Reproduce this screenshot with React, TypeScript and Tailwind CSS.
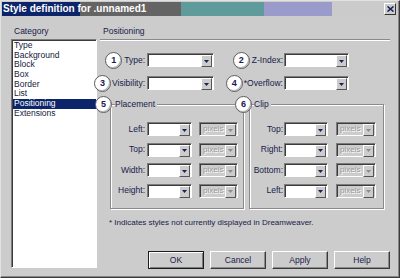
import React from 'react';

const labelColor = 'text-[#17204a]';

function Badge({ n }: { n: number }) {
  return (
    <div className="w-[17px] h-[17px] shrink-0 rounded-full bg-white border border-[#5c5c5c] shadow-[inset_-1px_-1px_0_#b8b8b8] flex items-center justify-center text-[9px] font-bold leading-none text-[#17204a]">
      {n}
    </div>
  );
}

function Select({ w, disabled }: { w: string; disabled?: boolean }) {
  return (
    <div
      className={`${w} h-[14px] shrink-0 flex border border-t-[#7c7c7c] border-l-[#7c7c7c] border-r-white border-b-white shadow-[inset_1px_1px_0_#3c3c3c] ${
        disabled ? 'bg-[#cccccc]' : 'bg-white'
      }`}
    >
      <div className="flex-1 pl-[3px] text-[8px] leading-[12px] text-[#9a9a9a] [text-shadow:1px_1px_0_#fff]">
        {disabled ? 'pixels' : ''}
      </div>
      <div className="w-[11px] h-[12px] mt-px mr-px bg-[#cccccc] border border-t-white border-l-white border-r-[#555] border-b-[#555] flex items-center justify-center">
        <svg width="5" height="3" viewBox="0 0 5 3">
          <path d="M0 0h5L2.5 3z" fill={disabled ? '#8c8c8c' : '#14235a'} />
        </svg>
      </div>
    </div>
  );
}

function Button({ children, primary }: { children: React.ReactNode; primary?: boolean }) {
  return (
    <div
      className={`w-[56px] h-[18px] flex items-center justify-center bg-[#cccccc] text-[8.5px] ${labelColor} ${
        primary
          ? 'border border-[#1c1c1c] shadow-[inset_1px_1px_0_#fff,inset_-1px_-1px_0_#7c7c7c]'
          : 'border border-t-white border-l-white border-r-[#3a3a3a] border-b-[#3a3a3a] shadow-[inset_-1px_-1px_0_#8a8a8a]'
      }`}
    >
      {children}
    </div>
  );
}

const categories = ['Type', 'Background', 'Block', 'Box', 'Border', 'List', 'Positioning', 'Extensions'];

export default function App() {
  return (
    <div className="w-[400px] h-[278px] flex flex-col bg-[#cccccc] border border-t-[#e2e2e2] border-l-[#e2e2e2] border-r-[#3a3a3a] border-b-[#3a3a3a] shadow-[inset_-1px_-1px_0_#888] font-['Liberation_Sans',Arial,sans-serif]">
      {/* title bar */}
      <div className="mt-px mx-px h-[14px] flex items-center bg-[linear-gradient(to_right,#0c2469_78px,#646464_78px,#646464_179px,#5f9b9a_179px,#5f9b9a_262px,#9a9acb_262px,#9a9acb_330px,#cbcbcb_330px)]">
        <span className="pl-[1px] text-[10px] font-bold text-white leading-[14px] whitespace-nowrap">
          Style definition for .unnamed1
        </span>
        <div className="flex-1" />
        <div className="w-[12px] h-[12px] mr-[2px] bg-[#cccccc] border border-t-white border-l-white border-r-[#333] border-b-[#333] flex items-center justify-center">
          <svg width="7" height="6" viewBox="0 0 7 6">
            <path d="M0.5 0.5l6 5M6.5 0.5l-6 5" stroke="#14235a" strokeWidth="1.6" />
          </svg>
        </div>
      </div>

      <div className="flex pt-[9px]">
        {/* category column */}
        <div className="ml-[10px] w-[86px] flex flex-col">
          <div className={`pl-[3px] h-[12px] leading-[12px] text-[8.5px] ${labelColor}`}>Category</div>
          <div className="mt-[2px] h-[229px] bg-white border border-t-[#7c7c7c] border-l-[#7c7c7c] border-r-white border-b-white shadow-[inset_1px_1px_0_#3c3c3c] pt-[1px] pl-[1px]">
            {categories.map((c) => (
              <div
                key={c}
                className={`h-[9.7px] leading-[9.7px] pl-[1px] text-[8.5px] ${
                  c === 'Positioning' ? 'bg-[#0c2469] text-white' : 'text-[#14193a]'
                }`}
              >
                {c}
              </div>
            ))}
          </div>
        </div>

        {/* positioning column */}
        <div className="ml-[3px] w-[290px] flex flex-col">
          <div className={`pl-[3px] h-[12px] leading-[12px] text-[8.5px] ${labelColor}`}>Positioning</div>
          <div className="mt-[2px] h-[2px] border-t border-t-[#8a8a8a] border-b border-b-white" />

          {/* row 1 */}
          <div className="mt-[12px] h-[14px] flex items-center">
            <div className="w-[45px] flex items-center justify-end gap-[2px]">
              <Badge n={1} />
              <span className={`text-[8.5px] ${labelColor}`}>Type:</span>
            </div>
            <div className="ml-[2px]">
              <Select w="w-[67px]" />
            </div>
            <div className="w-[69px] flex items-center justify-end gap-[2px]">
              <Badge n={2} />
              <span className={`text-[8.5px] ${labelColor}`}>Z-Index:</span>
            </div>
            <div className="ml-[1px]">
              <Select w="w-[65px]" />
            </div>
          </div>

          {/* row 2 */}
          <div className="mt-[9px] h-[14px] flex items-center">
            <div className="w-[45px] flex items-center justify-end gap-[1px]">
              <Badge n={3} />
              <span className={`text-[8.5px] ${labelColor}`}>Visibility:</span>
            </div>
            <div className="ml-[2px]">
              <Select w="w-[67px]" />
            </div>
            <div className="w-[69px] flex items-center justify-end gap-[1px]">
              <Badge n={4} />
              <span className={`text-[8.5px] ${labelColor}`}>*Overflow:</span>
            </div>
            <div className="ml-[1px]">
              <Select w="w-[65px]" />
            </div>
          </div>

          {/* group boxes */}
          <div className="mt-[14px] flex gap-[5px] pl-[10px]">
            <div className="relative w-[134px] h-[105px] border border-[#8a8a8a] shadow-[inset_1px_1px_0_#fff,1px_1px_0_#fff] pt-[17px] flex flex-col gap-[6.5px]">
              <div className="absolute -left-[16px] -top-[9px] flex items-center gap-[3px]">
                <Badge n={5} />
                <span className={`bg-[#cccccc] pr-[2px] text-[8.5px] ${labelColor}`}>Placement</span>
              </div>
              {['Left:', 'Top:', 'Width:', 'Height:'].map((l) => (
                <div key={l} className="h-[14px] flex items-center">
                  <div className={`w-[35px] pr-[1px] text-right text-[8.5px] ${labelColor}`}>{l}</div>
                  <div className="ml-[1px]">
                    <Select w="w-[45px]" />
                  </div>
                  <div className="ml-[7px]">
                    <Select w="w-[39px]" disabled />
                  </div>
                </div>
              ))}
            </div>
            <div className="relative w-[135px] h-[105px] border border-[#8a8a8a] shadow-[inset_1px_1px_0_#fff,1px_1px_0_#fff] pt-[17px] flex flex-col gap-[6.5px]">
              <div className="absolute -left-[15px] -top-[9px] flex items-center gap-[2px]">
                <Badge n={6} />
                <span className={`bg-[#cccccc] pr-[2px] text-[8.5px] ${labelColor}`}>Clip</span>
              </div>
              {['Top:', 'Right:', 'Bottom:', 'Left:'].map((l) => (
                <div key={l} className="h-[14px] flex items-center">
                  <div className={`w-[34px] pr-[1px] text-right text-[8.5px] ${labelColor}`}>{l}</div>
                  <Select w="w-[44px]" />
                  <div className="ml-[8px]">
                    <Select w="w-[40px]" disabled />
                  </div>
                </div>
              ))}
            </div>
          </div>

          <div className={`mt-[8px] pl-[9px] h-[12px] leading-[12px] text-[8px] ${labelColor}`}>
            * Indicates styles not currently displayed in Dreamweaver.
          </div>

          <div className="mt-[22px] flex justify-end gap-[6px]">
            <Button primary>OK</Button>
            <Button>Cancel</Button>
            <Button>Apply</Button>
            <Button>Help</Button>
          </div>
        </div>
      </div>
    </div>
  );
}
